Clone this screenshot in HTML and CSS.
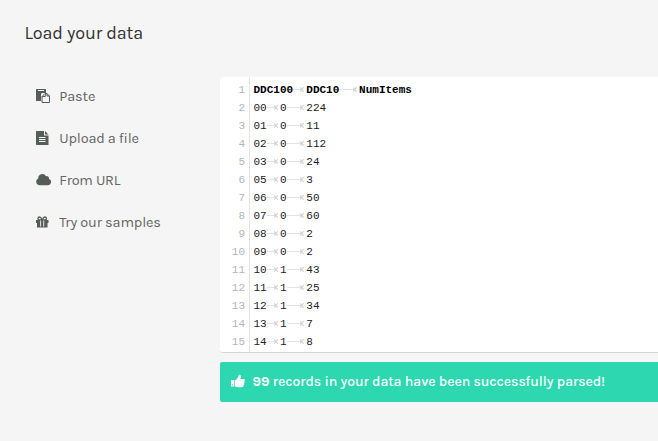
FILE: index.html
```
<!DOCTYPE html>
<html lang="en">
<head>
<meta charset="utf-8">
<title>Load your data</title>
<link rel="stylesheet" href="styles.css">
</head>
<body>
<h1><span class="fit" data-width="118.5">Load your data</span></h1>
<main class="layout">
  <nav class="menu">
    <a class="item"><svg class="icon" viewBox="0 0 14 14"><path d="M0 .5Q0 0 .5 0h9q.5 0 .5.5V4H6L5 5v7H.5Q0 12 0 11.500z"/><path class="cut" d="M2 1h6v1H2z"/><path class="sheet" d="M9 4.500h2l2.500 2.500v6.500h-7.500V7.500z"/><path class="line" d="M9.300 4.500v3H6M11 4.500v2.500h2.500"/></svg><span class="fit" data-width="36">Paste</span></a>
    <a class="item"><svg class="icon" viewBox="0 0 14 14"><path d="M.8 0H8v4.500h4.500V14H.8Q0 14 0 13.200V.8Q0 0 .8 0zM9 0l3.500 3.500H9z"/><path class="cut" d="M3 6h6.500v1H3zM3 8h6.500v1H3zM3 10h6.500v1H3z"/></svg><span class="fit" data-width="79.5">Upload a file</span></a>
    <a class="item"><svg class="icon cloud" viewBox="0 0 15 14"><path d="M3.800 12.200A3.600 3.600 0 0 1 2.200 5.400 4.200 4.200 0 0 1 10 3.200a2.400 2.400 0 0 1 3 2.900 3.150 3.150 0 0 1-.8 6.100z"/></svg><span class="fit" data-width="61">From URL</span></a>
    <a class="item"><svg class="icon" viewBox="0 0 14 14"><path d="M0 5h12.500v3H0zM1 8h10.500v4.500H1z"/><path class="bow" d="M6.200 5H3.600C1.300 5 1.500 2 3.600 2 5 2 5.700 4 6.200 5zm0 0h2.600c2.300 0 2.100-3 0-3-1.400 0-2.100 2-2.600 3z"/><path class="cut" d="M4.200 5.500h.9v6h-.9zM7.300 5.500h.9v6h-.9z"/></svg><span class="fit" data-width="101.5">Try our samples</span></a>
  </nav>
  <section class="content">
    <div class="editor" id="editor"></div>
    <div class="alert"><svg class="thumb" viewBox="0 0 14 14"><path fill-rule="evenodd" d="M0 6h3.300v6.500H0zM1 10.500v1h1v-1zM4 6.300C6 5.500 6.600 3.900 7.200 2.700 7.500 1.500 7.500.6 8.500.7c1.900.2 1.800 2.400.9 4.300h3.100c1.400 0 1.700 1.500.8 2.300.6.8.4 1.600-.2 2 .3.800.1 1.500-.5 1.900.2 1.300-.7 2-2.100 2H8c-1.700 0-2.600-.7-4-.8z"/></svg><span class="fit" data-width="352.5"><b>99</b> records in your data have been successfully parsed!</span></div>
  </section>
</main>
<script src="editor.js"></script>
</body>
</html>
```
FILE: styles.css
```
* { box-sizing: border-box; }
body {
  margin: 0;
  height: 441px;
  overflow: hidden;
  background: #f5f5f5;
  color: #555a58;
  font-family: Karla, Roboto, sans-serif;
  font-size: 14px;
}
h1 {
  margin: 0;
  padding: 22px 0 0 24.5px;
  height: 77px;
  font-size: 18px;
  line-height: 22px;
  font-weight: 400;
  color: #333;
}
.fit { white-space: nowrap; }
.layout { display: flex; }
.menu { width: 220px; flex: none; padding-left: 36px; }
.item { display: flex; align-items: center; height: 42px; }
.menu .item:first-child { height: 38px; margin-bottom: 2px; }
.menu .item .fit { font-weight: 400; color: #626664; font-size: 14.5px; }
.icon { width: 14px; height: 14px; margin-right: 9.3px; fill: #555d58; flex: none; }
.icon.cloud { width: 15px; margin-right: 8.3px; }
.cut { fill: #f5f5f5; }
.sheet { fill: #f5f5f5; stroke: #555d58; }
.line, .bow { fill: none; stroke: #555d58; }
.bow { stroke-width: 1.3; }
.content { flex: none; width: 450px; }
.editor {
  height: 276px;
  background: #fff;
  border-bottom: 1px solid #d5d5d5;
  border-radius: 3px;
  overflow: hidden;
  font: 11px/18px "Liberation Mono", monospace;
  color: #222;
}
.row { display: flex; height: 18px; white-space: pre; }
.row:first-child { height: 22px; padding-top: 4px; font-weight: 700; color: #000; }
.row:first-child .number { margin-top: -4px; padding-top: 4px; height: 22px; }
.row:last-child .number { height: 23px; }
.number {
  flex: none;
  width: 30px;
  padding-right: 4px;
  border-right: 1px solid #e5e5e5;
  text-align: right;
  font-weight: 400;
  color: #b5b5b5;
}
.code { display: flex; padding-left: 3.5px; }
.tab { display: flex; align-items: center; height: 17px; padding-right: 2px; }
.tab::before { content: ""; flex: 1; height: 1px; background: #e2e2e2; }
.tab svg { width: 4px; height: 5px; fill: none; stroke: #d6d6d6; stroke-width: 1.2; }
.alert {
  display: flex;
  align-items: center;
  height: 40px;
  padding-bottom: 2px;
  margin-top: 9px;
  padding-left: 11px;
  border-radius: 2px;
  background: #2dd8b1;
  color: #fff;
  font-size: 14px;
  font-weight: 500;
}
.thumb { width: 14px; height: 14px; margin-right: 7.5px; fill: #fff; }
```
FILE: editor.js
```
const rows = [
  ["DDC100", "DDC10", "NumItems"],
  ["00", "0", "224"], ["01", "0", "11"], ["02", "0", "112"],
  ["03", "0", "24"], ["05", "0", "3"], ["06", "0", "50"],
  ["07", "0", "60"], ["08", "0", "2"], ["09", "0", "2"],
  ["10", "1", "43"], ["11", "1", "25"], ["12", "1", "34"],
  ["13", "1", "7"], ["14", "1", "8"]
];
const charWidth = 6.6;
const tab = n => `<span class="tab" style="width:${n * charWidth}px"><svg viewBox="0 0 4 5"><path d="M0 .5l2 2-2 2M3.700 0L2 2.500l1.700 2.500M0 2.500h2"/></svg></span>`;
document.getElementById("editor").innerHTML = rows.map((cells, i) => {
  const code = cells.map((text, j) =>
    `<span>${text}</span>` + (j < 2 ? tab(4 - text.length % 4) : "")).join("");
  return `<div class="row"><span class="number">${i + 1}</span><span class="code">${code}</span></div>`;
}).join("");

document.querySelectorAll(".fit").forEach(el => {
  const gap = (el.dataset.width - el.getBoundingClientRect().width) / el.textContent.length;
  el.style.letterSpacing = `${gap}px`;
});
```
